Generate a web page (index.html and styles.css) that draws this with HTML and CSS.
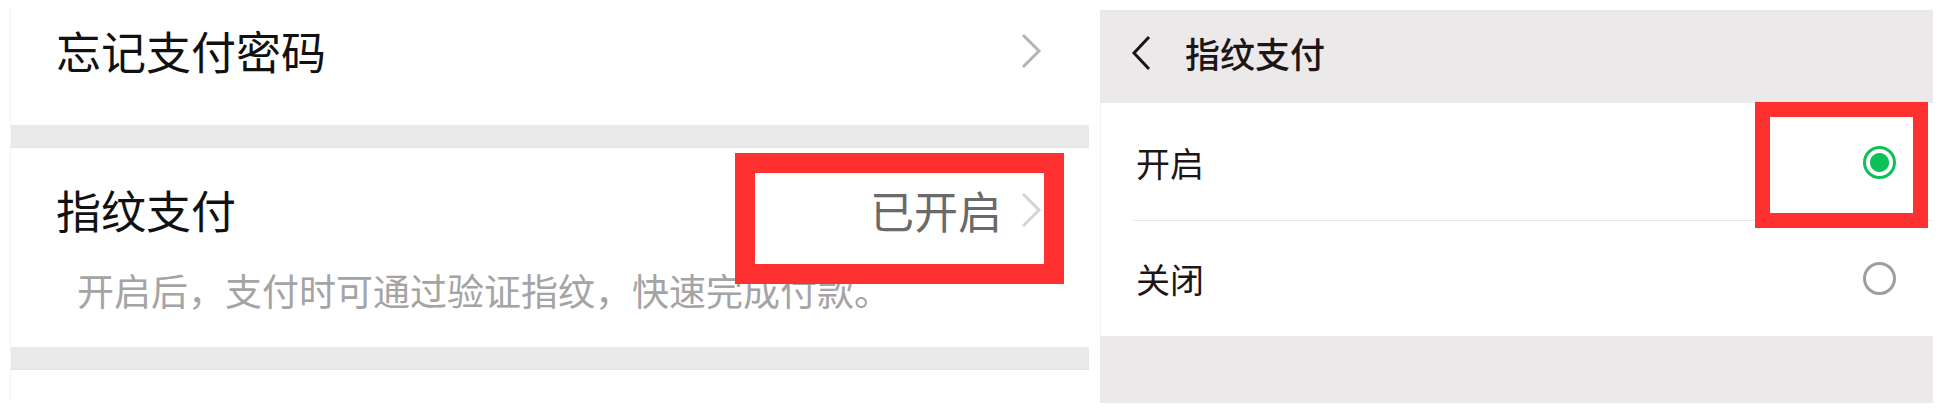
FILE: index.html
```html
<!DOCTYPE html>
<html lang="zh-CN">
<head>
    <meta charset="UTF-8">
    <meta name="viewport" content="width=device-width, initial-scale=1.0">
    <title>指纹支付</title>
    <link rel="stylesheet" href="styles.css">
</head>
<body>
    <div class="shots">
        <section class="panel settings">
            <div class="cell cell-top">
                <span class="title">忘记支付密码</span>
                <svg class="arrow" width="22" height="36" viewBox="0 0 22 36"><polyline points="3,2 19,18 3,34" /></svg>
            </div>
            <div class="gap"></div>
            <div class="cell cell-finger">
                <div class="row">
                    <span class="title">指纹支付</span>
                    <span class="value">已开启</span>
                    <svg class="arrow light" width="22" height="36" viewBox="0 0 22 36"><polyline points="3,2 19,18 3,34" /></svg>
                </div>
                <p class="tip">开启后，支付时可通过验证指纹，快速完成付款。</p>
            </div>
            <div class="gap"></div>
            <div class="cell cell-rest"></div>
            <div class="mark mark-status"></div>
        </section>

        <section class="panel finger">
            <div class="navbar">
                <svg class="back" width="20" height="36" viewBox="0 0 20 36"><polyline points="18,2 3,18 18,34" /></svg>
                <span class="nav-title">指纹支付</span>
            </div>
            <ul class="options">
                <li class="option"><span>开启</span><span class="radio on"></span></li>
                <li class="option"><span>关闭</span><span class="radio"></span></li>
            </ul>
            <div class="footer"></div>
            <div class="mark mark-radio"></div>
        </section>
    </div>
</body>
</html>
```

FILE: styles.css
```css
body {
    margin: 0;
    background-color: #fff;
    font-family: "Noto Sans CJK SC", "Noto Sans", sans-serif;
}
.shots {
    display: flex;
    align-items: flex-start;
    gap: 11px;
    padding-left: 10px;
}
.panel {
    position: relative;
}

/* left: wallet settings */
.settings {
    width: 1079px;
    margin-top: 8px;
    border-left: 1px solid #f4f4f4;
    box-sizing: border-box;
}
.cell {
    background-color: #fff;
}
.gap {
    height: 23px;
    background-color: #e9e9e9;
    border-bottom: 1px solid #e2e2e2;
    box-sizing: border-box;
}
.cell-top {
    height: 117px;
    display: flex;
    justify-content: space-between;
    align-items: center;
    padding: 0 47px 32px 45px;
    box-sizing: border-box;
}
.title {
    font-size: 45px;
    line-height: 1;
    color: #111;
}
.arrow polyline {
    fill: none;
    stroke: #b4b4b4;
    stroke-width: 3;
}
.arrow.light polyline {
    stroke: #d4d4d4;
}
.cell-finger {
    height: 199px;
    padding: 39px 47px 0 45px;
    box-sizing: border-box;
}
.row {
    display: flex;
    align-items: center;
}
.row .title {
    flex: 1;
}
.value {
    font-size: 44px;
    line-height: 1;
    color: #6a6a6a;
    margin-right: 18px;
}
.tip {
    margin: 40px 0 0 21px;
    font-size: 37px;
    line-height: 1;
    color: #a4a4a4;
}
.cell-rest {
    height: 30px;
}

/* right: fingerprint switch */
.finger {
    width: 833px;
    margin-top: 10px;
}
.navbar {
    height: 93px;
    background-color: #ebe9ea;
    display: flex;
    align-items: center;
    padding: 0 0 8px 31px;
    box-sizing: border-box;
}
.back polyline {
    fill: none;
    stroke: #1c1414;
    stroke-width: 3;
}
.nav-title {
    margin-left: 34px;
    font-size: 35px;
    font-weight: 500;
    line-height: 1;
    color: #1e1616;
}
.options {
    list-style: none;
    margin: 0;
    padding: 0 0 0 32px;
    background-color: #fff;
    border-left: 1px solid #f2f2f2;
}
.option {
    display: flex;
    justify-content: space-between;
    align-items: center;
    height: 117px;
    padding: 2px 37px 0 3px;
    box-sizing: border-box;
    font-size: 34px;
    line-height: 1;
    color: #1e1616;
}
.option + .option {
    height: 116px;
    padding-top: 0;
    border-top: 1px solid #e9e9e9;
}
.radio {
    width: 33px;
    height: 33px;
    border-radius: 50%;
    border: 3px solid #a29c9c;
    box-sizing: border-box;
}
.radio.on {
    border-color: #0cc157;
    background: radial-gradient(circle, #0cc157 0 9px, #fff 10px);
}
.footer {
    height: 67px;
    background-color: #ebe9ea;
}

/* red annotation frames */
.mark {
    position: absolute;
    box-sizing: border-box;
    border-style: solid;
    border-color: #fe3030;
}
.mark-status {
    left: 724px;
    top: 145px;
    width: 329px;
    height: 131px;
    border-width: 20px;
}
.mark-radio {
    left: 655px;
    top: 92px;
    width: 173px;
    height: 126px;
    border-width: 15px;
}
```
